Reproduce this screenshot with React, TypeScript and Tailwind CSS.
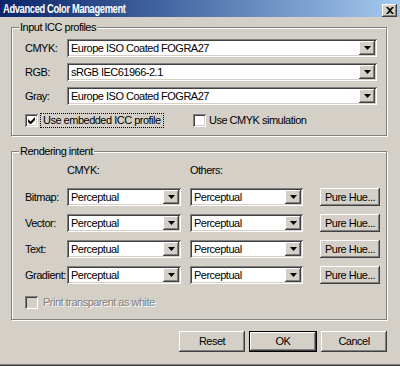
import React from "react";

const sunken =
  "shadow-[inset_1px_1px_0_#808080,inset_-1px_-1px_0_#ffffff,inset_2px_2px_0_#404040,inset_-2px_-2px_0_#d4d0c8]";
const raised =
  "shadow-[inset_-1px_-1px_0_#404040,inset_1px_1px_0_#ffffff,inset_-2px_-2px_0_#808080,inset_2px_2px_0_#d4d0c8]";

function Arrow() {
  return (
    <svg width="7" height="4" viewBox="0 0 7 4">
      <path d="M0 0h7L3.5 4z" fill="#000" />
    </svg>
  );
}

function Combo({ value, className }: { value: string; className: string }) {
  return (
    <div className={"flex h-[18px] bg-white p-[2px] " + sunken + " " + className}>
      <div className="flex flex-1 items-center overflow-hidden whitespace-nowrap pl-[2px] text-[11px] leading-none text-black">
        {value}
      </div>
      <div className={"flex h-full w-[16px] items-center justify-center bg-[#d4d0c8] " + raised}>
        <Arrow />
      </div>
    </div>
  );
}

function Check({ checked, disabled }: { checked?: boolean; disabled?: boolean }) {
  return (
    <div
      className={
        "flex h-[13px] w-[13px] shrink-0 items-center justify-center " +
        (disabled ? "bg-[#d4d0c8] " : "bg-white ") +
        sunken
      }
    >
      {checked && (
        <svg width="7" height="7" viewBox="0 0 7 7">
          <path d="M0 2v3l2 2h1l4-4V0L2.5 4.5z" fill="#000" />
        </svg>
      )}
    </div>
  );
}

function Btn({ children, className, def }: { children: React.ReactNode; className: string; def?: boolean }) {
  if (def) {
    return (
      <div className={"border border-black " + className}>
        <div className={"flex h-full w-full items-center justify-center bg-[#d4d0c8] text-[11px] text-black " + raised}>
          {children}
        </div>
      </div>
    );
  }
  return (
    <div className={"flex items-center justify-center bg-[#d4d0c8] text-[11px] text-black " + raised + " " + className}>
      {children}
    </div>
  );
}

function Group({ title, className, children }: { title: string; className: string; children: React.ReactNode }) {
  return (
    <div className={"relative border border-[#808080] shadow-[inset_1px_1px_0_#ffffff,1px_1px_0_#ffffff] " + className}>
      <span className="absolute -top-[8px] left-[7px] bg-[#d4d0c8] px-[1px] text-[11px] leading-[14px] text-black">
        {title}
      </span>
      {children}
    </div>
  );
}

export default function App() {
  const rows = ["Bitmap:", "Vector:", "Text:", "Gradient:"];
  return (
    <div className="h-[366px] w-[400px] overflow-hidden bg-[#d4d0c8] font-['Liberation_Sans',Arial,sans-serif] tracking-[-0.5px] text-black shadow-[inset_0_-1px_0_#404040,inset_0_-2px_0_#808080]">
      <div className="flex h-[17px] items-center justify-between bg-gradient-to-r from-[#0a246a] to-[#a6caf0] pl-[3px] pr-[3px]">
        <span className="inline-block origin-left scale-x-[0.72] whitespace-nowrap text-[13px] font-bold leading-none text-white">
          Advanced Color Management
        </span>
        <div className={"mt-[3px] flex h-[13px] w-[15px] items-center justify-center bg-[#d4d0c8] " + raised}>
          <svg width="8" height="7" viewBox="0 0 8 7">
            <path d="M0 0h2l2 2 2-2h2L5 3.5 8 7H6L4 5 2 7H0l3-3.5z" fill="#000" />
          </svg>
        </div>
      </div>

      <div className="pl-[11px] pr-[13px]">
        <Group title="Input ICC profiles" className="mt-[10px] h-[109px]">
          <div className="flex flex-col gap-[6px] pl-[13px] pr-[9px] pt-[11px]">
            {[
              ["CMYK:", "Europe ISO Coated FOGRA27"],
              ["RGB:", "sRGB IEC61966-2.1"],
              ["Gray:", "Europe ISO Coated FOGRA27"],
            ].map(([l, v]) => (
              <div key={l} className="flex items-center">
                <span className="w-[42px] text-[11px]">{l}</span>
                <Combo value={v} className="flex-1" />
              </div>
            ))}
          </div>
          <div className="mt-[8px] flex h-[15px] items-center pl-[13px]">
            <div className="flex w-[168px] items-center">
              <Check checked />
              <span className="ml-[2px] border border-dotted border-black px-[2px] text-[11px] leading-[13px]">
                Use embedded ICC profile
              </span>
            </div>
            <Check />
            <span className="ml-[3px] text-[11px]">Use CMYK simulation</span>
          </div>
        </Group>

        <Group title="Rendering intent" className="mt-[15px] h-[169px]">
          <div className="mt-[11px] flex h-[14px] items-center pl-[13px] text-[11px]">
            <span className="ml-[42px] w-[123px]">CMYK:</span>
            <span>Others:</span>
          </div>
          <div className="mt-[11px] flex flex-col gap-[8px] pl-[13px]">
            {rows.map((r) => (
              <div key={r} className="flex items-center">
                <span className="w-[42px] text-[11px]">{r}</span>
                <Combo value="Perceptual" className="w-[114px]" />
                <Combo value="Perceptual" className="ml-[9px] w-[113px]" />
                <Btn className="ml-[17px] h-[18px] w-[60px]">Pure Hue...</Btn>
              </div>
            ))}
          </div>
          <div className="mt-[12px] flex h-[13px] items-center pl-[13px]">
            <Check disabled />
            <span className="ml-[5px] text-[11px] text-[#808080] [text-shadow:1px_1px_0_#ffffff]">
              Print transparent as white
            </span>
          </div>
        </Group>

        <div className="mt-[11px] flex justify-end gap-[4px]">
          <Btn className="h-[21px] w-[66px]">Reset</Btn>
          <Btn def className="h-[21px] w-[68px]">OK</Btn>
          <Btn className="h-[21px] w-[66px]">Cancel</Btn>
        </div>
      </div>
    </div>
  );
}
